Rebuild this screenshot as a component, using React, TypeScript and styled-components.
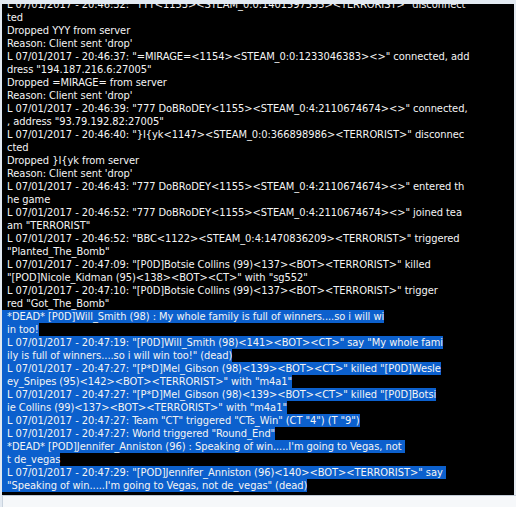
import React from "react";
import styled, { createGlobalStyle } from "styled-components";

const Global = createGlobalStyle`
  html, body { margin: 0; padding: 0; background: #f4f6f9; }
  #root { width: 516px; height: 507px; overflow: hidden; }
`;

const Frame = styled.div`
  width: 516px;
  height: 507px;
  display: flex;
  flex-direction: column;
  background: #e3eaf2;
`;

const Console = styled.div`
  margin: 4px 2px 0 2px;
  height: 491px;
  background: #000;
  overflow: hidden;
  font-family: "DejaVu Sans Condensed", "DejaVu Sans", sans-serif;
  font-size: 11px;
  letter-spacing: -0.05px;
  line-height: 13px;
  color: #f4f4f4;
`;

const Scroller = styled.div`
  margin-top: -6px;
`;

const Line = styled.div`
  height: 13px;
  white-space: pre;
`;

const Text = styled.span<{ $selected?: boolean }>`
  display: inline-block;
  height: 13px;
  padding-left: 5px;
  background: ${(p) => (p.$selected ? "#0c60cd" : "transparent")};
`;

const Footer = styled.div`
  flex: 1;
  margin-left: 2px;
  border-top: 1px solid #c3ccd7;
  border-left: 1px solid #c9d3de;
  background: #f6f8fa;
`;

const lines: string[] = [
  'L 07/01/2017 - 20:46:32: "YYY<1153><STEAM_0:0:1401597555><TERRORIST>" disconnect',
  "ted",
  "Dropped YYY from server",
  "Reason: Client sent 'drop'",
  'L 07/01/2017 - 20:46:37: "=MIRAGE=<1154><STEAM_0:0:1233046383><>" connected, add',
  'dress "194.187.216.6:27005"',
  "Dropped =MIRAGE= from server",
  "Reason: Client sent 'drop'",
  'L 07/01/2017 - 20:46:39: "777 DoBRoDEY<1155><STEAM_0:4:2110674674><>" connected,',
  ', address "93.79.192.82:27005"',
  'L 07/01/2017 - 20:46:40: "}I{yk<1147><STEAM_0:0:366898986><TERRORIST>" disconnec',
  "cted",
  "Dropped }I{yk from server",
  "Reason: Client sent 'drop'",
  'L 07/01/2017 - 20:46:43: "777 DoBRoDEY<1155><STEAM_0:4:2110674674><>" entered th',
  "he game",
  'L 07/01/2017 - 20:46:52: "777 DoBRoDEY<1155><STEAM_0:4:2110674674><>" joined tea',
  'am "TERRORIST"',
  'L 07/01/2017 - 20:46:52: "BBC<1122><STEAM_0:4:1470836209><TERRORIST>" triggered',
  '"Planted_The_Bomb"',
  'L 07/01/2017 - 20:47:09: "[P0D]Botsie Collins (99)<137><BOT><TERRORIST>" killed',
  '"[POD]Nicole_Kidman (95)<138><BOT><CT>" with "sg552"',
  'L 07/01/2017 - 20:47:10: "[P0D]Botsie Collins (99)<137><BOT><TERRORIST>" trigger',
  'red "Got_The_Bomb"',
];

const selected: string[] = [
  "*DEAD* [P0D]Will_Smith (98) : My whole family is full of winners....so i will wi",
  "in too!",
  'L 07/01/2017 - 20:47:19: "[P0D]Will_Smith (98)<141><BOT><CT>" say "My whole fami',
  'ily is full of winners....so i will win too!" (dead)',
  'L 07/01/2017 - 20:47:27: "[P*D]Mel_Gibson (98)<139><BOT><CT>" killed "[P0D]Wesle',
  'ey_Snipes (95)<142><BOT><TERRORIST>" with "m4a1"',
  'L 07/01/2017 - 20:47:27: "[P*D]Mel_Gibson (98)<139><BOT><CT>" killed "[P0D]Botsi',
  'ie Collins (99)<137><BOT><TERRORIST>" with "m4a1"',
  'L 07/01/2017 - 20:47:27: Team "CT" triggered "CTs_Win" (CT "4") (T "9")',
  'L 07/01/2017 - 20:47:27: World triggered "Round_End"',
  "*DEAD* [POD]Jennifer_Anniston (96) : Speaking of win.....I'm going to Vegas, not ",
  "t de_vegas",
  'L 07/01/2017 - 20:47:29: "[POD]Jennifer_Anniston (96)<140><BOT><TERRORIST>" say ',
  '"Speaking of win.....I\'m going to Vegas, not de_vegas" (dead)',
];

export default function App() {
  return (
    <>
      <Global />
      <Frame>
        <Console>
          <Scroller>
            {lines.map((l, i) => (
              <Line key={"a" + i}>
                <Text>{l}</Text>
              </Line>
            ))}
            {selected.map((l, i) => (
              <Line key={"b" + i}>
                <Text $selected>{l}</Text>
              </Line>
            ))}
          </Scroller>
        </Console>
        <Footer />
      </Frame>
    </>
  );
}
